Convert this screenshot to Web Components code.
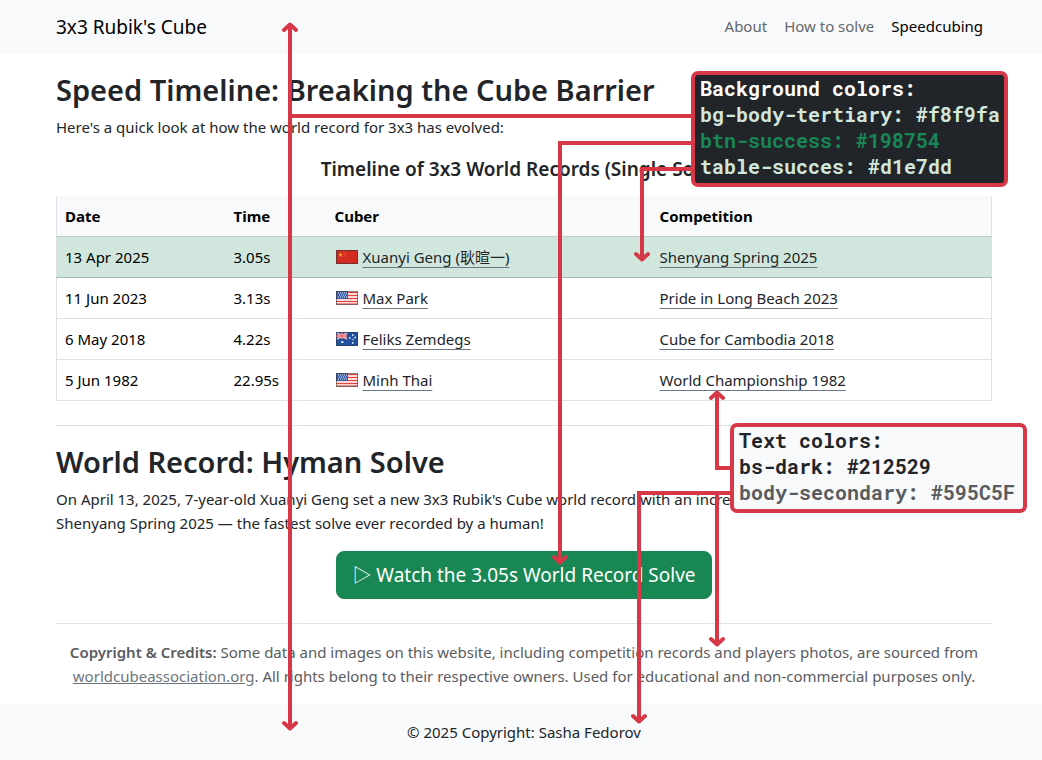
<!DOCTYPE html>
<html lang="en">
<head>
<meta charset="utf-8">
<title>3x3 Rubik's Cube</title>
<style>
  body {
    margin: 0;
    background: #fff;
    color: #212529;
    font: 15px/24px "Segoe UI", "Noto Sans", "Noto Sans CJK SC", sans-serif;
    --tertiary: #f8f9fa;
    --secondary: #595c5f;
    --success: #198754;
    --success-soft: #d1e7dd;
    --line: #dee2e6;
    --mark: #d63848;
    --gutter: 0 50px 0 56px;
  }
</style>
</head>
<body>
<cube-page>
  <cube-header slot="header" brand="3x3 Rubik's Cube"></cube-header>
  <cube-section heading="Speed Timeline: Breaking the Cube Barrier">
    <p>Here's a quick look at how the world record for 3x3 has evolved:</p>
    <record-table></record-table>
  </cube-section>
  <cube-section heading="World Record: Hyman Solve" ruled>
    <p>On April 13, 2025, 7-year-old Xuanyi Geng set a new 3x3 Rubik's Cube world record with an incredible time of 3.05 seconds at Shenyang Spring 2025 — the fastest solve ever recorded by a human!</p>
    <watch-button>▷ Watch the 3.05s World Record Solve</watch-button>
  </cube-section>
  <cube-credits></cube-credits>
  <cube-footer slot="footer">© 2025 Copyright: Sasha Fedorov</cube-footer>
  <note-layer slot="notes"></note-layer>
</cube-page>

<script>
const define = (name, html, setup) => {
  const template = document.createElement('template');
  template.innerHTML = html;
  customElements.define(name, class extends HTMLElement {
    connectedCallback() {
      if (this.shadowRoot) return;
      const root = this.attachShadow({ mode: 'open' });
      root.append(template.content.cloneNode(true));
      if (setup) setup(this, root);
    }
  });
};

define('cube-page', `
  <style>
    :host { display: flex; flex-direction: column; min-height: 100vh; position: relative; }
    main { flex: 1; padding: var(--gutter); }
  </style>
  <slot name="header"></slot>
  <main><slot></slot></main>
  <slot name="footer"></slot>
  <slot name="notes"></slot>`);

define('cube-header', `
  <style>
    :host { display: block; background: var(--tertiary); padding: var(--gutter); }
    header { display: flex; justify-content: space-between; align-items: center; min-height: 54px; }
    a { text-decoration: none; }
    .brand { font-size: 19px; color: #000; }
    nav { display: flex; gap: 17px; padding: 0 9px 2px 0; }
    nav a { color: #65686b; }
    nav a[aria-current] { color: #000; }
  </style>
  <header>
    <a class="brand" href="#home"></a>
    <nav>
      <a href="#about">About</a>
      <a href="#solve">How to solve</a>
      <a href="#speed" aria-current="page">Speedcubing</a>
    </nav>
  </header>`, (host, root) => {
  root.querySelector('.brand').textContent = host.getAttribute('brand');
});

define('cube-section', `
  <style>
    :host { display: block; padding-top: 16px; }
    :host([ruled]) { margin-top: 24px; border-top: 1px solid var(--line); }
    h2 { margin: 0 0 5px; font-size: 29px; line-height: 40px; font-weight: 600; }
    ::slotted(p) { margin: 0 0 16px; }
  </style>
  <h2></h2>
  <slot></slot>`, (host, root) => {
  root.querySelector('h2').textContent = host.getAttribute('heading');
});

const FLAGS = {
  cn: `<rect width="22" height="14" fill="#d32b22"/>
    <path d="M4.500 2.500l.6 1.600 1.600.1-1.300 1 .5 1.600-1.400-.9-1.400.9.5-1.600-1.300-1 1.600-.1z" fill="#f6a623"/>
    <path d="M7.500 2h1M8.800 3.500h1M8.800 5.200h1M7.500 6.700h1" stroke="#f0871f"/>`,
  us: `<rect width="22" height="14" fill="#fbd9d8"/>
    <path d="M0 1.500h22M0 4.500h22M0 7.500h22M0 10.500h22M0 13h22" stroke="#e2453f" stroke-width="1.200"/>
    <rect width="12" height="8" fill="#3b5fa8"/>
    <path d="M2 2h9M3 4h8M2 6h9" stroke="#dfe8f7" stroke-dasharray="1 1"/>`,
  au: `<rect width="22" height="14" fill="#21509f"/>
    <path d="M1 1l10 6M11 1L1 7M6 0v7M0 4h11" stroke="#f3b6b9" stroke-width="1.800"/>
    <path d="M6 0v7M0 4h11" stroke="#e0454d" stroke-width=".8"/>
    <path d="M5 10h2.500M13 6h1.500M16 3h1.500M18.500 5.500H20M16 11h1.500M16.500 7.500h1" stroke="#fff" stroke-width="1.500"/>`
};

define('flag-icon', `
  <style>
    :host { display: inline-block; width: 22px; height: 14px; margin-left: 1px; vertical-align: -1px; }
    svg { display: block; }
  </style>
  <svg width="22" height="14" viewBox="0 0 22 14" aria-hidden="true"></svg>`, (host, root) => {
  root.querySelector('svg').innerHTML = FLAGS[host.getAttribute('country')] +
    '<rect x=".5" y=".5" width="21" height="13" fill="none" stroke="#333" stroke-opacity=".55"/>';
});

define('record-table', `
  <style>
    :host { display: block; }
    table { width: 100%; border-collapse: collapse; table-layout: fixed; color: #000; }
    caption { color: #212529; font-size: 19px; line-height: 24px; font-weight: 600; padding: 2px 0 15px; }
    .date { width: 169px; } .time { width: 101px; } .cuber { width: 325px; }
    th, td { padding: 8px; text-align: left; border-bottom: 1px solid var(--line); }
    thead th { background: var(--tertiary); border-bottom-color: #c6c7c8; font-weight: 700; }
    tbody, thead { border: solid var(--line); border-width: 0 1px; }
    .best td { background: var(--success-soft); border-bottom-color: #a7b9b1; }
    a { color: #212529; text-decoration: underline 1px #6b7785; text-underline-offset: 4px; text-decoration-skip-ink: none; }
    flag-icon + a { margin-left: 5px; }
  </style>
  <table>
    <caption>Timeline of 3x3 World Records (Single Solve)</caption>
    <colgroup><col class="date"><col class="time"><col class="cuber"><col></colgroup>
    <thead><tr><th scope="col">Date</th><th scope="col">Time</th><th scope="col">Cuber</th><th scope="col">Competition</th></tr></thead>
    <tbody>
      <tr class="best"><td>13 Apr 2025</td><td>3.05s</td><td><flag-icon country="cn"></flag-icon><a href="#geng">Xuanyi Geng (耿暄一)</a></td><td><a href="#shenyang">Shenyang Spring 2025</a></td></tr>
      <tr><td>11 Jun 2023</td><td>3.13s</td><td><flag-icon country="us"></flag-icon><a href="#park">Max Park</a></td><td><a href="#pride">Pride in Long Beach 2023</a></td></tr>
      <tr><td>6 May 2018</td><td>4.22s</td><td><flag-icon country="au"></flag-icon><a href="#zemdegs">Feliks Zemdegs</a></td><td><a href="#cambodia">Cube for Cambodia 2018</a></td></tr>
      <tr><td>5 Jun 1982</td><td>22.95s</td><td><flag-icon country="us"></flag-icon><a href="#thai">Minh Thai</a></td><td><a href="#wc1982">World Championship 1982</a></td></tr>
    </tbody>
  </table>`);

define('watch-button', `
  <style>
    :host { display: flex; justify-content: center; }
    button { font: inherit; font-size: 19px; line-height: 30px; color: #fff; background: var(--success);
      border: 1px solid var(--success); border-radius: 8px; padding: 8px 15px; }
  </style>
  <button type="button"><slot></slot></button>`);

define('cube-credits', `
  <style>
    :host { display: block; margin-top: 24px; padding: 16px 0; border-top: 1px solid var(--line);
      color: var(--secondary); text-align: center; }
    p { margin: 0; }
    strong { font-weight: 600; }
    a { color: #6c757d; }
  </style>
  <p><strong>Copyright &amp; Credits:</strong> Some data and images on this website, including competition records and players photos, are sourced from <a href="#wca">worldcubeassociation.org</a>. All rights belong to their respective owners. Used for educational and non-commercial purposes only.</p>`);

define('cube-footer', `
  <style>
    :host { display: block; background: var(--tertiary); padding: var(--gutter); }
    footer { padding: 16px 0; text-align: center; }
  </style>
  <footer><slot></slot></footer>`);

define('color-note', `
  <style>
    :host { display: block; position: absolute; border: 4px solid var(--mark); border-radius: 7px; padding: 0 4px 4px 5px;
      background: var(--tertiary); color: #212529; white-space: nowrap;
      font: 700 20px/26px "Roboto Mono", "Liberation Mono", monospace; }
    :host([dark]) { background: #212529; color: #fff; }
  </style>
  <slot></slot>`);

define('note-layer', `
  <style>
    :host { display: block; position: absolute; inset: 0; overflow: hidden; pointer-events: none; }
    svg { position: absolute; inset: 0; overflow: visible; }
    path { fill: none; stroke: var(--mark); stroke-width: 4px; }
    .head { stroke-linecap: round; stroke-linejoin: round; }
    .backgrounds { left: 691px; top: 71px; }
    .texts { left: 730px; top: 423px; padding-right: 8px; }
    .soft { color: var(--success-soft); }
    .success { color: var(--success); }
    .secondary { color: var(--secondary); }
  </style>
  <svg width="1" height="1" aria-hidden="true">
    <path d="M290 25V728M290 116H693"/>
    <path d="M693 143H560V563"/>
    <path d="M693 169H642V260"/>
    <path d="M732 468H717V393"/>
    <path d="M732 493H639V722M717 493V645"/>
    <path class="head" d="M284 30l6-5.500 6 5.500M284 723l6 5.500 6-5.500"/>
    <path class="head" d="M554 557l6 5.500 6-5.500M636 254l6 5.500 6-5.500"/>
    <path class="head" d="M711 398l6-5.500 6 5.500M711 639l6 5.500 6-5.500M633 716l6 5.500 6-5.500"/>
  </svg>
  <color-note class="backgrounds" dark>
    <div>Background colors:</div>
    <div class="soft">bg-body-tertiary: #f8f9fa</div>
    <div class="success">btn-success: #198754</div>
    <div class="soft">table-succes: #d1e7dd</div>
  </color-note>
  <color-note class="texts">
    <div>Text colors:</div>
    <div>bs-dark: #212529</div>
    <div class="secondary">body-secondary: #595C5F</div>
  </color-note>`);
</script>
</body>
</html>
